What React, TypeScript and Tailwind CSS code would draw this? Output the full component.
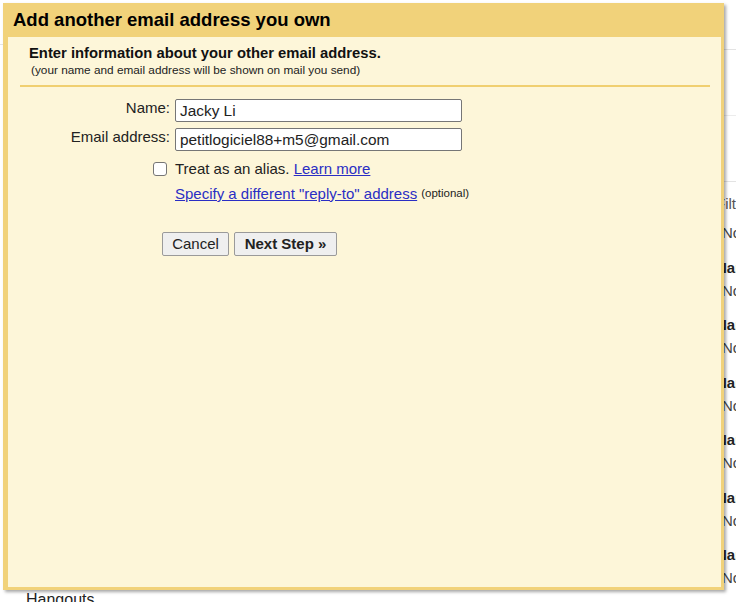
import React from 'react';

const font = "font-['Liberation_Sans',Arial,sans-serif]";

const BackgroundList: React.FC = () => {
  const pairs = [0, 1, 2, 3, 4, 5];
  return (
    <div className="w-[20px] overflow-hidden whitespace-nowrap text-[15px] leading-[20px]">
      <div className="h-[50px] border-b border-[#e3e3e3]" />
      <div className="h-[66px] border-b border-[#ececec]" />
      <div className="h-[66px] border-b border-[#e3e3e3]" />
      <div className="pt-[12px] text-[#555]">Filters</div>
      <div className="pt-[9px] pl-[6px] text-[#444]">No filters</div>
      {pairs.map((i) => (
        <div key={i} className="pt-[14.5px]">
          <div className="font-bold text-[#222]">Name</div>
          <div className="pt-[3px] pl-[6px] text-[#444]">No address</div>
        </div>
      ))}
    </div>
  );
};

const App: React.FC = () => {
  return (
    <div className={`relative w-[736px] h-[602px] overflow-hidden bg-white ${font}`}>
      {/* page behind the dialog */}
      <div className="flex h-full">
        <div className="flex-1 border-t border-[#e5e5e5] mt-[44px]">
          <div className="pt-[545px] pl-[26px] text-[16px] leading-[20px] text-[#222]">Hangouts</div>
        </div>
        <BackgroundList />
      </div>

      {/* dialog */}
      <div className="absolute top-[3px] left-[3px] w-[721px] h-[587px] flex flex-col bg-[#f1d27a] shadow-[2px_2px_3px_rgba(0,0,0,0.35)]">
        <div className="h-[34px] flex items-center px-[10px] text-[18.5px] font-bold text-black">
          Add another email address you own
        </div>
        <div className="flex-1 ml-[5px] mr-[3px] mb-[3px] bg-[#fdf6d9]">
          <div className="pl-[21px] pt-[8px]">
            <div className="text-[14.8px] leading-[17px] font-bold text-[#111]">
              Enter information about your other email address.
            </div>
            <div className="mt-[1px] pl-[2px] text-[11.8px] leading-[14px] text-[#222]">
              (your name and email address will be shown on mail you send)
            </div>
          </div>
          <div className="mt-[8px] ml-[12px] mr-[11px] h-[2px] bg-[#f0cf70]" />

          <div className="mt-[12px] grid grid-cols-[162px_287px] gap-x-[5px] text-[15px] text-[#222]">
            <div className="text-right leading-[18px]">Name:</div>
            <div className="h-[23px] border border-[#767676] rounded-[2px] bg-white px-[4px] flex items-center text-[15.4px]">
              Jacky Li
            </div>
            <div className="mt-[6px] text-right leading-[18px]">Email address:</div>
            <div className="mt-[6px] h-[23px] border border-[#767676] rounded-[2px] bg-white px-[4px] flex items-center text-[15.4px]">
              petitlogiciel88+m5@gmail.com
            </div>

            <div className="mt-[8px] h-[20px] flex items-center justify-end pr-[3px]">
              <div className="w-[14px] h-[14px] border border-[#767676] rounded-[3px] bg-white" />
            </div>
            <div className="mt-[8px] h-[20px] flex items-center whitespace-nowrap">
              Treat as an alias.&nbsp;
              <span className="text-[#2a2ec4] underline">Learn more</span>
            </div>

            <div />
            <div className="mt-[5px] h-[20px] flex items-center whitespace-nowrap">
              <span className="text-[#2a2ec4] underline">Specify a different "reply-to" address</span>
              <span className="ml-[4px] text-[11.5px]">(optional)</span>
            </div>
          </div>

          <div className="mt-[28px] pl-[154px] flex gap-[5px] text-[15px] text-[#222]">
            <button className="h-[24px] w-[67px] border border-[#9a9a9a] rounded-[2px] bg-[#efefef]">
              Cancel
            </button>
            <button className="h-[24px] w-[103px] border border-[#9a9a9a] rounded-[2px] bg-[#efefef] font-bold">
              Next Step »
            </button>
          </div>
        </div>
      </div>
    </div>
  );
};

export default App;
